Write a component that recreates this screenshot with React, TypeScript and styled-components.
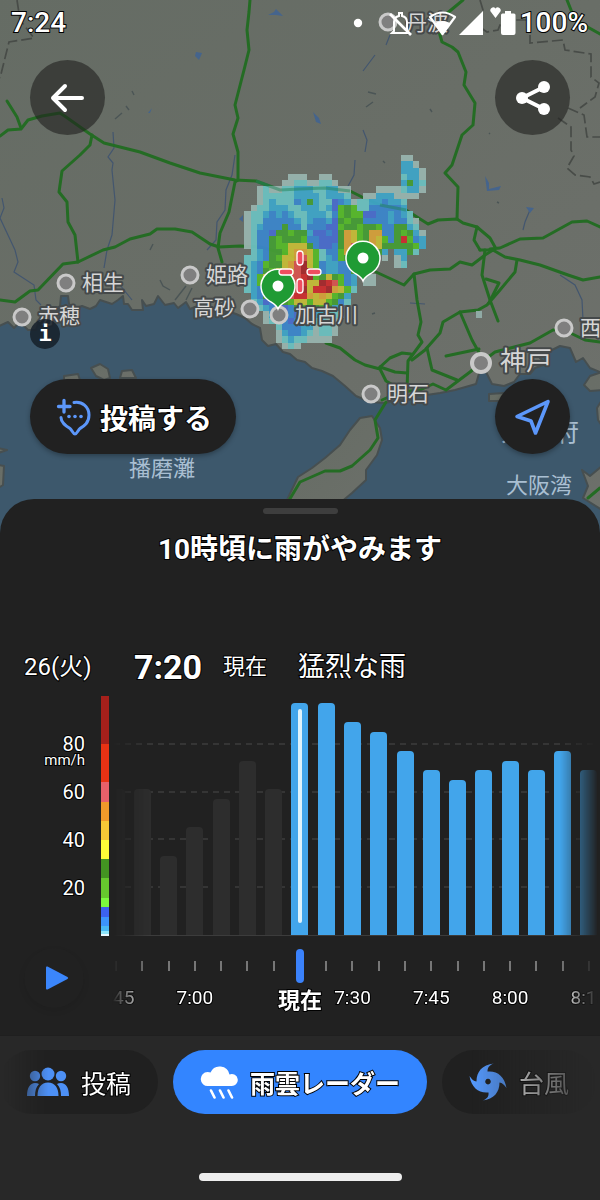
import React from "react";
import styled, { createGlobalStyle } from "styled-components";

const GlobalStyle = createGlobalStyle`
  *, *::before, *::after { box-sizing: border-box; }
  body {
    margin: 0;
    background: #282828;
    color: #fff;
    font-family: Roboto, "Noto Sans CJK JP", sans-serif;
    -webkit-text-stroke: 2px #000;
    paint-order: stroke fill;
  }
  svg { paint-order: normal; }
  button { font: inherit; color: inherit; border: 0; padding: 0; cursor: pointer; }
`;

/* ---------- layout ---------- */

const Page = styled.div`
  min-height: 100vh;
  display: flex;
  flex-direction: column;
  overflow: hidden;
`;

const MapArea = styled.section`
  position: relative;
  height: 540px;
  background: #3d586c;
`;

const MapCanvas = styled.svg`
  position: absolute;
  inset: 0;
  width: 100%;
  height: 100%;
  -webkit-text-stroke: 0;
`;

const MapLabels = styled.g`
  font-family: "Noto Sans CJK JP", sans-serif;
  paint-order: stroke;
`;

const Overlay = styled.div`
  position: relative;
  display: flex;
  flex-direction: column;
`;

const StatusBar = styled.header`
  height: 45px;
  padding: 0 12px 0 11px;
  display: flex;
  justify-content: space-between;
  align-items: center;
  font-size: 28px;
  font-weight: 500;
  line-height: 32px;
`;

const StatusIcons = styled.div`
  display: flex;
  align-items: center;
  gap: 4px;
`;

const ControlRow = styled.div<{ $top: number }>`
  margin-top: ${(p) => p.$top}px;
  padding: 0 30px;
  display: flex;
  justify-content: space-between;
`;

const RoundButton = styled.button<{ $solid?: boolean }>`
  width: 75px;
  height: 75px;
  border-radius: 50%;
  display: grid;
  place-items: center;
  background: ${(p) => (p.$solid ? "#212121" : "rgba(32, 32, 30, 0.6)")};
  box-shadow: ${(p) => (p.$solid ? "0 2px 5px rgba(0, 0, 0, 0.3)" : "none")};
`;

const InfoButton = styled.button`
  width: 30px;
  height: 30px;
  margin: 184px 0 0 30px;
  border-radius: 50%;
  background: rgba(23, 33, 43, 0.88);
  font: bold 22px/28px "DejaVu Sans Mono", monospace;
  -webkit-text-stroke: 0;
`;

const PostButton = styled.button`
  width: 206px;
  height: 75px;
  border-radius: 38px;
  padding-left: 26px;
  display: flex;
  align-items: center;
  gap: 8px;
  background: #212121;
  box-shadow: 0 2px 5px rgba(0, 0, 0, 0.3);
  font-size: 28px;
  font-weight: 700;
  white-space: nowrap;
`;

/* ---------- sheet ---------- */

const Sheet = styled.main`
  position: relative;
  margin-top: -41px;
  padding-top: 9px;
  border-radius: 34px 34px 0 0;
  background: #212121;
`;

const Handle = styled.div`
  width: 75px;
  height: 6px;
  margin: 0 auto;
  border-radius: 3px;
  background: #3e3e3e;
`;

const Headline = styled.h1`
  margin: 16px 0 0;
  text-align: center;
  font-size: 28px;
  line-height: 40px;
  font-weight: 700;
`;

const Summary = styled.div`
  margin-top: 77px;
  padding-left: 24px;
  height: 40px;
  display: flex;
  align-items: center;
  line-height: 40px;
  white-space: nowrap;
`;

const DateText = styled.span`
  width: 110px;
  font-size: 24px;
`;

const TimeText = styled.strong`
  width: 89px;
  font-size: 34px;
  font-weight: 700;
`;

const NowText = styled.span`
  width: 75px;
  font-size: 22px;
`;

const RainText = styled.span`
  font-size: 27px;
`;

const ChartGrid = styled.section`
  margin-top: 9px;
  display: grid;
  grid-template-columns: 101px 8px minmax(0, 1fr);
  grid-template-rows: 240px 99px;
  height: 339px;
`;

const Axis = styled.div`
  padding: 39px 16px 0 0;
  text-align: right;
  font-size: 20px;
  line-height: 18px;
`;

const AxisLabel = styled.div`
  height: 48px;
`;

const Unit = styled.div`
  font-size: 15px;
  line-height: 14px;
`;

const Scale = styled.div`
  display: flex;
  flex-direction: column;
`;

const ScaleStep = styled.div<{ $span: number; $color: string }>`
  flex: ${(p) => p.$span} 0 0;
  background: ${(p) => p.$color};
`;

const fade = `
  mask-image: linear-gradient(90deg, transparent 9px, #000 46px, #000 calc(100% - 42px), rgba(0,0,0,.45) calc(100% - 22px), transparent calc(100% - 4px));
`;

const Plot = styled.div`
  position: relative;
  margin: 0 -2px 0 -6px;
  display: grid;
  grid-template-columns: repeat(19, minmax(0, 1fr));
  border-bottom: 1px solid #3c3c3c;
  ${fade}
`;

const GridLines = styled.div`
  position: absolute;
  inset: 0;
  display: flex;
  flex-direction: column;
  justify-content: space-between;
  padding: 47px 0;
`;

const GridLine = styled.div`
  height: 2px;
  background: repeating-linear-gradient(90deg, #353535 0 6px, transparent 6px 11px);
`;

const Slot = styled.div`
  position: relative;
  display: flex;
  justify-content: center;
  align-items: flex-end;
`;

const Bar = styled.div<{ $past: boolean }>`
  width: 17px;
  border-radius: 4px 4px 0 0;
  background: ${(p) => (p.$past ? "#2d2d2d" : "#42a5eb")};
  display: flex;
  justify-content: center;
  padding: 6px 0 12px;
`;

const Cursor = styled.span`
  width: 4px;
  border-radius: 2px;
  background: #dff3fd;
`;

const PlayCell = styled.div`
  grid-column: 1 / 3;
  padding: 12px 0 0 24px;
`;

const PlayButton = styled.button`
  width: 60px;
  height: 60px;
  padding-left: 6px;
  border-radius: 50%;
  display: grid;
  place-items: center;
  background: #212121;
  box-shadow: 0 3px 6px rgba(0, 0, 0, 0.08);
`;

const Timeline = styled.div`
  margin: 0 -2px 0 -6px;
  display: grid;
  grid-template-columns: repeat(19, minmax(0, 1fr));
  ${fade}
`;

const TickSlot = styled.div`
  display: flex;
  flex-direction: column;
  align-items: center;
`;

const TickBox = styled.div`
  height: 60px;
  display: flex;
  align-items: center;
`;

const Tick = styled.span<{ $active: boolean }>`
  width: ${(p) => (p.$active ? 8 : 2)}px;
  height: ${(p) => (p.$active ? 34 : 10)}px;
  border-radius: ${(p) => (p.$active ? 4 : 0)}px;
  background: ${(p) => (p.$active ? "#3b82fb" : "#777")};
`;

const TickLabel = styled.span<{ $active: boolean }>`
  margin-top: ${(p) => (p.$active ? -7 : -10)}px;
  font-size: ${(p) => (p.$active ? 22 : 19)}px;
  font-weight: ${(p) => (p.$active ? 700 : 400)};
  line-height: 24px;
  white-space: nowrap;
`;

/* ---------- bottom tabs ---------- */

const Footer = styled.footer`
  flex: 1;
  display: flex;
  flex-direction: column;
  justify-content: space-between;
  align-items: center;
  background: #282828;
  border-top: 1px solid #1f1f1f;
  padding: 14px 0 19px;
`;

const Tabs = styled.nav`
  align-self: stretch;
  display: flex;
  gap: 15px;
  overflow: hidden;
  mask-image: linear-gradient(90deg, transparent 4px, #000 48px, #000 calc(100% - 130px), transparent calc(100% - 5px));
`;

const Tab = styled.button<{ $active?: boolean }>`
  flex: none;
  height: 64px;
  padding: 0 27px;
  border-radius: 32px;
  display: flex;
  align-items: center;
  gap: 12px;
  background: ${(p) => (p.$active ? "#3385ff" : "#202020")};
  font-size: 25px;
  font-weight: ${(p) => (p.$active ? 700 : 400)};
  white-space: nowrap;
`;

const HomeBar = styled.div`
  width: 203px;
  height: 8px;
  border-radius: 4px;
  background: #eee;
`;

/* ---------- data ---------- */

const rainfall = [61, 61, 33, 45, 57, 73, 61, 97, 97, 89, 85, 77, 69, 65, 69, 73, 69, 77, 69];
const NOW = 7;
const tickLabels: Record<number, string> = {
  0: "6:45", 3: "7:00", 7: "現在", 9: "7:30", 12: "7:45", 15: "8:00", 18: "8:15",
};

const scaleSteps: [number, string][] = [
  [20, "#a5201b"], [16, "#e83214"], [8, "#e8606a"], [8, "#f09a2a"], [8, "#f6c836"],
  [8, "#fdfd38"], [8, "#439422"], [8, "#66c82e"], [4, "#7cfb3e"], [4, "#3c62ee"],
  [4, "#3c94fa"], [2, "#48b8f2"], [1, "#8ce4f8"], [1, "#e6f8ff"],
];

const radarColors: Record<string, string> = {
  w: "#98b4ae", c: "#6cc0bf", b: "#3fa4c6", d: "#3c86ca", p: "#4a6ccc",
  g: "#469c36", h: "#57b82a", y: "#c4ba38", o: "#d4a03a", s: "#d65450",
  r: "#cb2e30", k: "#a42a2e",
};

const radarRows = [
  ".........................ww..",
  ".........................bbw.",
  ".........................bbbw",
  ".......www..ww...........cbbw",
  "......wwccwwccw..........bgbc",
  "..wcwwccbbbccbbww....wwwwcbbw",
  "..wcccccbbbbcbbbc..wwbbbwwww.",
  "..wcbcccdbgbccpdbwccbbdbbc...",
  ".wccbbbccbbbcbphghccdddddb...",
  "wccbdbdbccbbbcdhghhppddbdbc..",
  "wccdddddbcbddbpghggddddbddcw.",
  "wcbdddgddcdddpphgghgghddggbc.",
  "wcddpgghggbppdpgoyhgooddghgbw",
  "wcddghggghddpppgoyhgoyhdgrhdb",
  "wcddghhyyygdppdgosyyoyggggghb",
  ".cbdgghyooyhcddhosryogb.bbgc.",
  "ccbdghyyosyhcbdhgosyy.w.wb...",
  "cbdhggyoskyhdbbddghyh...wc...",
  "cbdghyyoskkhdbbddghb.........",
  "cbhygyyssrkhgyghdb.ww........",
  "cbhygyossryykrshdb.ww........",
  "cbdhyyosskyrrkoyhc...........",
  ".bdghhysrroyoyhgb............",
  ".cbpdgghyyhyyhgdc............",
  ".wcbdppdghhghgbb.............",
  "...wbdddpddbbccw.............",
  "...wcbdpddbccww..............",
  ".....cdddbbwccw..............",
  ".....wbddbcwccw..............",
  ".....wcbccwwww...............",
  "......wcw....................",
];

const cities = [
  { x: 388, y: 22, name: "丹波", tx: 406, ty: 30 },
  { x: 66, y: 283, name: "相生", tx: 82, ty: 290 },
  { x: 22, y: 317, name: "赤穂", tx: 38, ty: 323 },
  { x: 190, y: 275, name: "姫路", tx: 206, ty: 282 },
  { x: 250, y: 309, name: "高砂", tx: 193, ty: 315 },
  { x: 279, y: 315, name: "加古川", tx: 295, ty: 322 },
  { x: 371, y: 394, name: "明石", tx: 387, ty: 401 },
  { x: 564, y: 328, name: "西宮", tx: 580, ty: 335 },
  { x: 481, y: 363, name: "神戸", tx: 500, ty: 370, big: true },
];

const seas = [
  { name: "播磨灘", x: 129, y: 476, size: 22 },
  { name: "大阪湾", x: 506, y: 493, size: 22 },
  { name: "大阪府", x: 501, y: 441, size: 26 },
];

const roads = [
  "250,0 249,12 247,30 249,50 244,70 235,105 238,118 233,134 238,152 238,180 235,182 229,212 220,233 218,248 222,262",
  "7,101 17,117 21,128",
  "0,136 8,130 21,129 28,120 42,116 60,113 66,117 90,134 104,143 140,152 170,163 200,173 235,180 256,181 280,190 300,189 325,188 350,191 362,197 380,205 406,210 428,224 438,220 457,219 463,223 477,227 490,238 495,247",
  "477,227 474,240 480,250",
  "490,249 500,248 520,239 543,238 572,222 587,221 600,227",
  "463,0 445,15 438,28 442,42 452,47 458,52 466,72 464,85 475,103 473,125 462,135 452,165 445,173 458,187 457,219",
  "567,0 575,20 600,34",
  "92,135 90,145 80,155 62,171 59,192 67,202 68,222 75,235 78,262",
  "0,300 15,302 30,291 38,290 63,264 78,262 103,250 115,247 130,239 150,234 157,229 175,229 192,232 210,244 219,247 240,246 260,247 290,255 320,270",
  "376,272 404,285 414,274 430,270 450,269 460,262 472,265 485,255 493,250",
  "414,274 417,300 421,322 418,335 422,342 408,361 407,390",
  "480,250 493,250 505,257 520,260 540,265 568,275 583,280 600,277",
  "485,250 482,275 490,300 498,321",
  "486,279 499,283 489,303",
  "517,260 515,272 500,290 487,305 478,310 460,312 443,322 440,333 425,350 412,360",
  "460,312 472,340 482,358",
  "446,356 479,349",
  "487,358 495,352 530,343 553,330 564,330 585,340 600,342",
  "427,348 432,370 457,380",
  "382,400 400,392 420,390 433,384 446,390 470,372 482,362",
  "326,343 340,348 355,360 365,365 380,369 386,381 398,388",
  "380,367 390,358 402,353 411,354",
  "380,367 395,372 407,373",
  "386,402 375,420 378,438 370,450 352,466 340,471 325,471 300,482 288,502",
  "588,498 600,488",
];

const borders = [
  "17,0 20,20 34,38 9,42 0,78",
  "480,0 483,10 477,25 487,32 498,30 502,20 530,20",
  "530,35 530,43 563,40 565,50 591,54 591,77 599,83 595,97 580,108",
  "558,118 571,127 571,150 574,156 567,168 575,175 590,177 594,184 600,182",
  "568,108 584,115 587,137 600,137",
];

const rivers = [
  "113,132 114,148 108,157 113,163 112,170 115,200 112,235 107,250 104,268",
  "235,155 232,175 226,190 225,210 217,222 216,240 207,250",
  "2,198 4,208 0,218 15,250 18,262 14,272 34,285 36,300 41,305",
  "363,130 367,140 365,152 M355,160 354,175 347,188",
  "390,35 386,45 M375,55 363,71",
  "560,275 575,285 582,300 583,320",
  "410,303 425,304",
  "120,285 132,300",
  "523,230 525,222 530,210",
];

/* ---------- map drawing ---------- */

const line = (pts: string) => "M" + pts.replace(/ M/g, "M");

const Pin = ({ x, y }: { x: number; y: number }) => (
  <g transform={`translate(${x} ${y})`}>
    <path d="M0 23C-2 18-6 17-10 14A17 17 0 1 1 10 14C6 17 2 18 0 23Z" fill="#1f9b34" stroke="#fff" strokeWidth="1.5" />
    <circle r="5.5" fill="#fff" />
  </g>
);

const MapDrawing = () => (
  <MapCanvas viewBox="0 0 600 540" preserveAspectRatio="xMidYMin slice" aria-label="雨雲レーダー地図">
    <defs>
      <linearGradient id="land" x1="0" y1="0" x2="1" y2="1">
        <stop offset="0" stopColor="#656c64" />
        <stop offset=".5" stopColor="#696e67" />
        <stop offset="1" stopColor="#6d706b" />
      </linearGradient>
    </defs>
    <g fill="url(#land)" stroke="#474f50" strokeWidth="2" strokeLinejoin="round">
      <path d="M-5-5H605V374L590 368 583 358 576 362 570 348 560 346 548 352 540 358 546 364 535 368 530 374 520 374 514 382 504 386 492 384 486 372 480 370 476 384 455 390 440 393 420 396 400 400 385 403 370 402 356 396 345 386 333 376 322 371 312 368 305 362 297 360 290 354 283 352 276 344 268 346 262 340 260 328 252 324 245 318 236 314 225 310 212 308 200 305 190 309 186 302 178 308 174 303 165 305 158 296 154 304 146 306 142 300 143 310 132 310 128 304 124 304 123 296 118 300 112 304 106 302 100 300 96 306 90 309 82 306 76 308 69 304 68 296 61 296 60 306 50 312 40 318 36 330 28 330 20 322 14 328 8 322-5 328Z" />
      <path d="M372 416 380 428 382 440 377 455 366 470 366 480 352 493 340 503 320 545H280L287 500 298 477 312 468 325 458 340 445 350 430 360 418Z" />
      <path d="M91 368 100 364 108 369 110 378 104 380 96 376ZM122 371 132 370 136 378 120 378ZM64 376 78 374 80 380 64 380Z" />
      <path d="M584 385 590 376 602 372V390L590 391ZM602 400 597 408 598 420 602 426ZM582 470 590 476 602 466V510L583 498 588 486ZM489 394 504 393 514 396 514 401 489 401Z" />
      <path d="M-2 448 7 450-2 453ZM-2 465 4 466 3 485-2 488Z" />
    </g>
    <g fill="none" stroke="#43566f" strokeWidth="1.2">
      {rivers.map((d) => <path key={d} d={line(d)} />)}
    </g>
    <g fill="#45648c">
      <path d="M268 15 274 12 276 9 279 12 283 16 276 15ZM196 52 202 53 199 60 195 56ZM148 113 152 108 150 113ZM313 112 319 118 321 124 316 122ZM485 176 489 183 489 189 501 186 499 190 487 191ZM526 207 534 208 530 213ZM239 219 243 215 243 222Z" />
    </g>
    <path d="M115 119 122 113M126 106 129 110M132 91 134 95M366 107 373 102M368 92 376 94M430 109 432 112M383 161 385 163M160 280 163 286 170 290M186 300 192 288M175 300 186 286M150 250 153 244M335 318 337 319M372 314 375 313M497 202 499 203M489 133 490 134" stroke="#4b5556" strokeWidth="1.4" fill="none" />
    <g fill="none" stroke="#484c48" strokeWidth="1.7" strokeDasharray="11 4">
      {borders.map((d) => <path key={d} d={line(d)} />)}
    </g>
    <g fill="none" stroke="#246c24" strokeWidth="3" strokeLinejoin="round" strokeLinecap="round">
      {roads.map((d) => <path key={d} d={line(d)} />)}
    </g>
    <g transform="translate(244.3 155) scale(6.25)" shapeRendering="crispEdges" opacity=".95">
      {radarRows.map((row, r) =>
        row.split("").map((c, i) =>
          c === "." ? null : <rect key={`${r}-${i}`} x={i} y={r} width="1.02" height="1.02" fill={radarColors[c]} />
        )
      )}
      <rect x="37" y="25" width="1" height="1" fill="#92aea9" />
    </g>
    <path d="M256 181 280 190 300 189 325 188 350 191M380 205 406 210" fill="none" stroke="#24845c" strokeWidth="3" opacity=".5" />
    {cities.map((c) => (
      <circle key={c.name} cx={c.x} cy={c.y} r={c.big ? 9 : 8} fill="#7f7f7f" stroke="#c9c9c9" strokeWidth={c.big ? 4 : 3} />
    ))}
    <MapLabels fill="#d6d6d6" stroke="#45494a" strokeWidth="4" strokeLinejoin="round">
      {cities.map((c) => (
        <text key={c.name} x={c.tx} y={c.ty} fontSize={c.big ? 26 : 21}>{c.name}</text>
      ))}
    </MapLabels>
    <MapLabels fill="#a9bfd2">
      {seas.map((s) => (
        <text key={s.name} x={s.x} y={s.y} fontSize={s.size}>{s.name}</text>
      ))}
    </MapLabels>
    <Pin x={363} y={258} />
    <Pin x={278} y={286} />
    <g fill="#ee4d5f" stroke="#fff" strokeWidth="1.3">
      <rect x="297" y="251" width="6" height="14" rx="3" />
      <rect x="297" y="279" width="6" height="14" rx="3" />
      <rect x="279" y="269" width="14" height="6" rx="3" />
      <rect x="307" y="269" width="14" height="6" rx="3" />
    </g>
  </MapCanvas>
);

/* ---------- icons ---------- */

const StatusGlyphs = () => (
  <svg width="164" height="32" viewBox="0 0 164 32" fill="#fff" aria-hidden="true">
    <circle cx="6" cy="16" r="4.2" />
    <path d="M42 24V15q0-5 5-6V6h3v3q5 1 5 6v9l2 2H40Z" fill="none" stroke="#fff" strokeWidth="2" />
    <path d="M38 7 59 28" stroke="#fff" strokeWidth="2.600" />
    <path d="M78 10Q90.500 1 103 10L90.500 27Z" fill="none" stroke="#fff" strokeWidth="2.200" strokeLinejoin="round" />
    <path d="M83 16q7.500-4 15 0L90.500 27Z" />
    <path d="M107 28 131 4V28Z" />
    <path d="M143.500 11 139 5a2.700 2.700 0 0 1 4.500-3.500A2.700 2.700 0 0 1 148 5Z" />
    <path d="M153 4h6v2.500h3q1.500 0 1.500 1.500V26q0 2-2 2H151q-2 0-2-2V8q0-1.500 1.500-1.500H153Z" />
  </svg>
);

const BackIcon = () => (
  <svg width="36" height="30" viewBox="0 0 36 30" fill="none" stroke="#fff" strokeWidth="4" strokeLinecap="round" strokeLinejoin="round">
    <path d="M32 15H3M15 3 3 15l12 12" />
  </svg>
);

const ShareIcon = () => (
  <svg width="36" height="36" viewBox="0 0 36 36" fill="#fff">
    <path d="M29 7 7 18l22 11" fill="none" stroke="#fff" strokeWidth="4" />
    <circle cx="7" cy="18" r="6" />
    <circle cx="29" cy="7" r="6" />
    <circle cx="29" cy="29" r="6" />
  </svg>
);

const PostIcon = () => (
  <svg width="36" height="38" viewBox="0 0 36 38" fill="none" stroke="#5c97fa" strokeWidth="3" strokeLinecap="round">
    <path d="M8 2.500V14M2.500 8.500H14" strokeWidth="3.300" />
    <path d="M18 4.500C26 3 33 9 33 17C33 25 28 28 24 30.500C22 32 21 36 19 36C17 36 16 32 14 30.500C10 28 5 25 5 19.500" />
    <g fill="#5c97fa" stroke="none">
      <circle cx="13" cy="18.500" r="1.800" /><circle cx="19" cy="18.500" r="1.800" /><circle cx="25" cy="18.500" r="1.800" />
    </g>
  </svg>
);

const LocateIcon = () => (
  <svg width="38" height="38" viewBox="0 0 38 38" fill="none" stroke="#5c97fa" strokeWidth="3.600" strokeLinejoin="round">
    <path d="M34 3.500 3 18.500 17 23 21.500 35Z" />
  </svg>
);

const PlayIcon = () => (
  <svg width="24" height="24" viewBox="0 0 24 24" fill="#3b86fb">
    <path d="M1 1.500Q1 0 2.500.6L22.500 11Q24 12 22.500 13L2.500 23.400Q1 24 1 22.500Z" />
  </svg>
);

const PeopleIcon = () => (
  <svg width="42" height="32" viewBox="1 0 42 32" fill="#4d90f5">
    <circle cx="22" cy="8" r="6.500" />
    <circle cx="9" cy="10" r="5.200" />
    <circle cx="35" cy="10" r="5.200" />
    <path d="M11.500 30C11.500 22 15 16.500 22 16.500S32.500 22 32.500 30Z" />
    <path d="M1 30C1 22 4 17 9 17Q11.500 17 13 18C10 21 9 25 9 30Z" />
    <path d="M43 30C43 22 40 17 35 17Q32.500 17 31 18C34 21 35 25 35 30Z" />
  </svg>
);

const RainIcon = () => (
  <svg width="38" height="34" viewBox="0 0 38 34" fill="#fff">
    <path d="M8 21A7 7 0 0 1 7.500 7Q9.500 7 10.500 7.500A10 10 0 0 1 29.500 9.500A6 6 0 1 1 31 21Z" />
    <path d="M11 25.500l3.500 7M20 25.500l3.500 7M28.500 25.500l3.500 7" stroke="#fff" strokeWidth="2.600" strokeLinecap="round" />
  </svg>
);

const TyphoonIcon = () => (
  <svg width="38" height="38" viewBox="0 0 38 38" fill="#559aff">
    <path fillRule="evenodd" d="M25 .5C20.500 2 18.500 4.500 18.500 8.500C28 7.500 35.500 13 37.500 25C35 21.500 33.500 20 30.500 19.500C30.500 29 25 36.500 13.500 37.500C18 36 20 33.500 19.500 29.500C10 30.500 2.500 25 .5 13C3 16.500 4.500 18 7.500 18.500C7.500 9 13 1.500 25 .5ZM19 15.800a2.800 2.800 0 1 0 .01 0Z" />
  </svg>
);

export default function App() {
  return (
    <Page>
      <GlobalStyle />
      <MapArea>
        <MapDrawing />
        <Overlay>
          <StatusBar>
            <span>7:24</span>
            <StatusIcons>
              <StatusGlyphs />
              <span>100%</span>
            </StatusIcons>
          </StatusBar>
          <ControlRow $top={15}>
            <RoundButton aria-label="戻る"><BackIcon /></RoundButton>
            <RoundButton aria-label="共有"><ShareIcon /></RoundButton>
          </ControlRow>
          <InfoButton aria-label="情報">i</InfoButton>
          <ControlRow $top={30}>
            <PostButton><PostIcon />投稿する</PostButton>
            <RoundButton $solid aria-label="現在地"><LocateIcon /></RoundButton>
          </ControlRow>
        </Overlay>
      </MapArea>

      <Sheet>
        <Handle />
        <Headline>10時頃に雨がやみます</Headline>
        <Summary>
          <DateText>26(火)</DateText>
          <TimeText>7:20</TimeText>
          <NowText>現在</NowText>
          <RainText>猛烈な雨</RainText>
        </Summary>
        <ChartGrid>
          <Axis>
            <AxisLabel>80<Unit>mm/h</Unit></AxisLabel>
            <AxisLabel>60</AxisLabel>
            <AxisLabel>40</AxisLabel>
            <AxisLabel>20</AxisLabel>
          </Axis>
          <Scale>
            {scaleSteps.map(([span, color]) => <ScaleStep key={color} $span={span} $color={color} />)}
          </Scale>
          <Plot>
            <GridLines><GridLine /><GridLine /><GridLine /><GridLine /></GridLines>
            {rainfall.map((mm, i) => (
              <Slot key={i}>
                <Bar $past={i < NOW} style={{ height: `${mm}%` }}>{i === NOW && <Cursor />}</Bar>
              </Slot>
            ))}
          </Plot>
          <PlayCell>
            <PlayButton aria-label="再生"><PlayIcon /></PlayButton>
          </PlayCell>
          <Timeline>
            {rainfall.map((_, i) => (
              <TickSlot key={i}>
                <TickBox><Tick $active={i === NOW} /></TickBox>
                {tickLabels[i] && <TickLabel $active={i === NOW}>{tickLabels[i]}</TickLabel>}
              </TickSlot>
            ))}
          </Timeline>
        </ChartGrid>
      </Sheet>

      <Footer>
        <Tabs>
          <Tab><PeopleIcon />投稿</Tab>
          <Tab $active><RainIcon />雨雲レーダー</Tab>
          <Tab><TyphoonIcon />台風</Tab>
        </Tabs>
        <HomeBar />
      </Footer>
    </Page>
  );
}
